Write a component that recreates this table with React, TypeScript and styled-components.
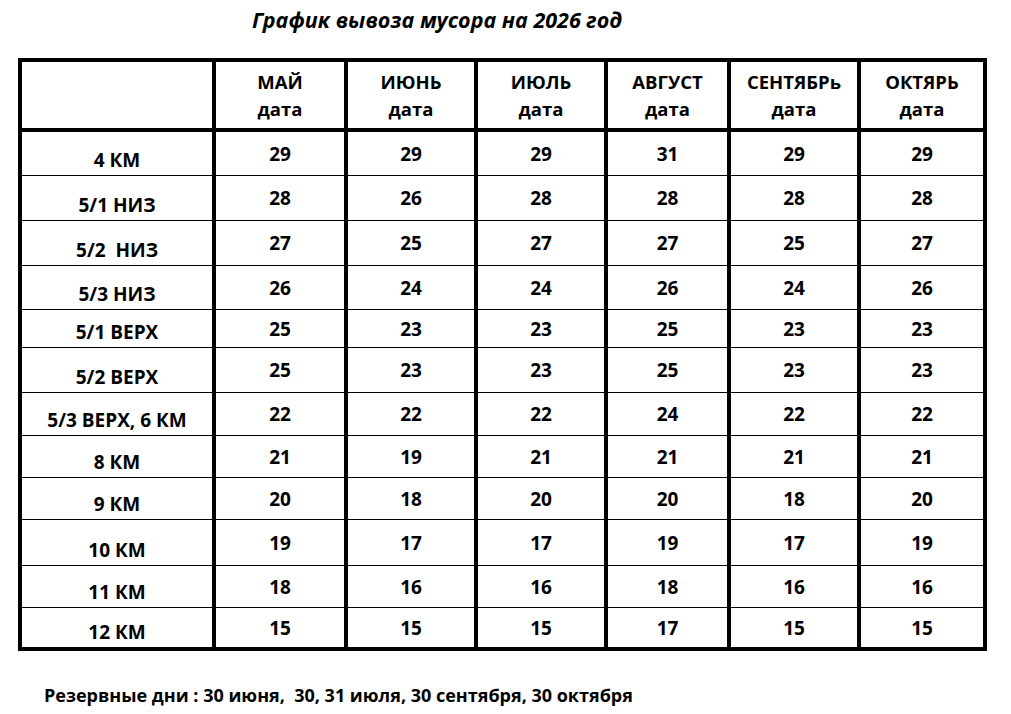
import React from "react";
import styled, { createGlobalStyle } from "styled-components";

const GlobalStyle = createGlobalStyle`
  html, body {
    margin: 0;
    padding: 0;
    background: #ffffff;
  }
  body {
    font-family: "Open Sans", "Noto Sans", "DejaVu Sans", sans-serif;
    color: #000;
  }
`;

const Page = styled.div`
  width: 1011px;
  height: 714px;
  box-sizing: border-box;
  padding-left: 18px;
  background: #fff;
  overflow: hidden;
`;

const Title = styled.h1`
  margin: 0 0 26px 234px;
  padding-top: 8px;
  font-size: 21.5px;
  line-height: 24px;
  font-weight: 700;
  font-style: italic;
  white-space: pre;
`;

const Grid = styled.div`
  display: grid;
  width: max-content;
  grid-template-columns: 190px 128px 126px 126px 119px 126px 122px;
  grid-template-rows: 69px 43px 44px 44px 43px 37px 44px 42px 41px 41px 45px 41px 39px;
  column-gap: 4px;
  row-gap: 1px;
  background: #000;
  border: 4px solid #000;
`;

const Cell = styled.div`
  background: #fff;
  display: flex;
  justify-content: center;
  font-weight: 700;
  font-size: 19px;
  white-space: pre;
`;

const HeadCell = styled(Cell)`
  flex-direction: column;
  align-items: center;
  justify-content: center;
  border-bottom: 3px solid #000;
  line-height: 27px;
  font-size: 18.5px;
`;

const LabelCell = styled(Cell)`
  align-items: flex-end;
  line-height: 22px;
  padding-bottom: 4px;
`;

const DateCell = styled(Cell)`
  align-items: center;
  line-height: 22px;
`;

const Footer = styled.p`
  margin: 33px 0 0 26px;
  font-size: 18px;
  line-height: 22px;
  font-weight: 700;
  white-space: pre;
`;

const months = ["МАЙ", "ИЮНЬ", "ИЮЛЬ", "АВГУСТ", "СЕНТЯБРь", "ОКТЯРЬ"];

const rows: [string, number[]][] = [
  ["4 КМ", [29, 29, 29, 31, 29, 29]],
  ["5/1 НИЗ", [28, 26, 28, 28, 28, 28]],
  ["5/2  НИЗ", [27, 25, 27, 27, 25, 27]],
  ["5/3 НИЗ", [26, 24, 24, 26, 24, 26]],
  ["5/1 ВЕРХ", [25, 23, 23, 25, 23, 23]],
  ["5/2 ВЕРХ", [25, 23, 23, 25, 23, 23]],
  ["5/3 ВЕРХ, 6 КМ", [22, 22, 22, 24, 22, 22]],
  ["8 КМ", [21, 19, 21, 21, 21, 21]],
  ["9 КМ", [20, 18, 20, 20, 18, 20]],
  ["10 КМ", [19, 17, 17, 19, 17, 19]],
  ["11 КМ", [18, 16, 16, 18, 16, 16]],
  ["12 КМ", [15, 15, 15, 17, 15, 15]],
];

export default function App() {
  return (
    <Page>
      <GlobalStyle />
      <Title>График вывоза мусора на 2026 год</Title>
      <Grid>
        <HeadCell />
        {months.map((m) => (
          <HeadCell key={m}>
            <span>{m}</span>
            <span>дата</span>
          </HeadCell>
        ))}
        {rows.map(([label, dates]) => (
          <React.Fragment key={label}>
            <LabelCell>{label}</LabelCell>
            {dates.map((d, i) => (
              <DateCell key={i}>{d}</DateCell>
            ))}
          </React.Fragment>
        ))}
      </Grid>
      <Footer>Резервные дни : 30 июня,  30, 31 июля, 30 сентября, 30 октября</Footer>
    </Page>
  );
}
